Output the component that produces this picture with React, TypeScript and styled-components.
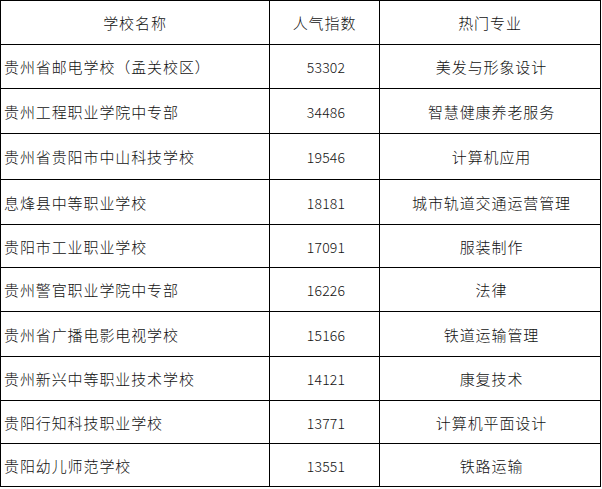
import styled, { createGlobalStyle } from "styled-components";

const GlobalStyle = createGlobalStyle`
  html, body {
    margin: 0;
    padding: 0;
    background: #fff;
  }
  body {
    font-family: "Noto Sans CJK SC", "Noto Sans", sans-serif;
    color: #111;
  }
`;

const Table = styled.table`
  width: 600px;
  border-collapse: collapse;
  table-layout: fixed;
  font-size: 15px;
  font-weight: 300;
`;

const Cell = styled.td<{ $align?: "left" | "center" }>`
  border: 1px solid #000;
  padding: 0 0 0 3px;
  text-align: ${(p) => p.$align ?? "center"};
  vertical-align: middle;
  white-space: nowrap;
  line-height: 1;
  letter-spacing: 0.9px;
`;

const HeadCell = styled.th`
  border: 1px solid #000;
  padding: 0;
  font-weight: 300;
  text-align: center;
  vertical-align: middle;
  line-height: 1;
  letter-spacing: 0.9px;
`;

const Num = styled.span`
  font-size: 14px;
  letter-spacing: 0.2px;
`;

const Row = styled.tr<{ $h: number }>`
  height: ${(p) => p.$h}px;
`;

const rows = [
  { name: "贵州省邮电学校（孟关校区）", score: "53302", major: "美发与形象设计", h: 44 },
  { name: "贵州工程职业学院中专部", score: "34486", major: "智慧健康养老服务", h: 45 },
  { name: "贵州省贵阳市中山科技学校", score: "19546", major: "计算机应用", h: 46 },
  { name: "息烽县中等职业学校", score: "18181", major: "城市轨道交通运营管理", h: 45 },
  { name: "贵阳市工业职业学校", score: "17091", major: "服装制作", h: 43 },
  { name: "贵州警官职业学院中专部", score: "16226", major: "法律", h: 44 },
  { name: "贵州省广播电影电视学校", score: "15166", major: "铁道运输管理", h: 45 },
  { name: "贵州新兴中等职业技术学校", score: "14121", major: "康复技术", h: 44 },
  { name: "贵阳行知科技职业学校", score: "13771", major: "计算机平面设计", h: 43 },
  { name: "贵阳幼儿师范学校", score: "13551", major: "铁路运输", h: 43 },
];

export default function App() {
  return (
    <>
      <GlobalStyle />
      <Table>
        <colgroup>
          <col style={{ width: 269 }} />
          <col style={{ width: 110 }} />
          <col style={{ width: 221 }} />
        </colgroup>
        <thead>
          <Row $h={44}>
            <HeadCell>学校名称</HeadCell>
            <HeadCell>人气指数</HeadCell>
            <HeadCell>热门专业</HeadCell>
          </Row>
        </thead>
        <tbody>
          {rows.map((r) => (
            <Row key={r.name} $h={r.h}>
              <Cell $align="left">{r.name}</Cell>
              <Cell>
                <Num>{r.score}</Num>
              </Cell>
              <Cell>{r.major}</Cell>
            </Row>
          ))}
        </tbody>
      </Table>
    </>
  );
}
